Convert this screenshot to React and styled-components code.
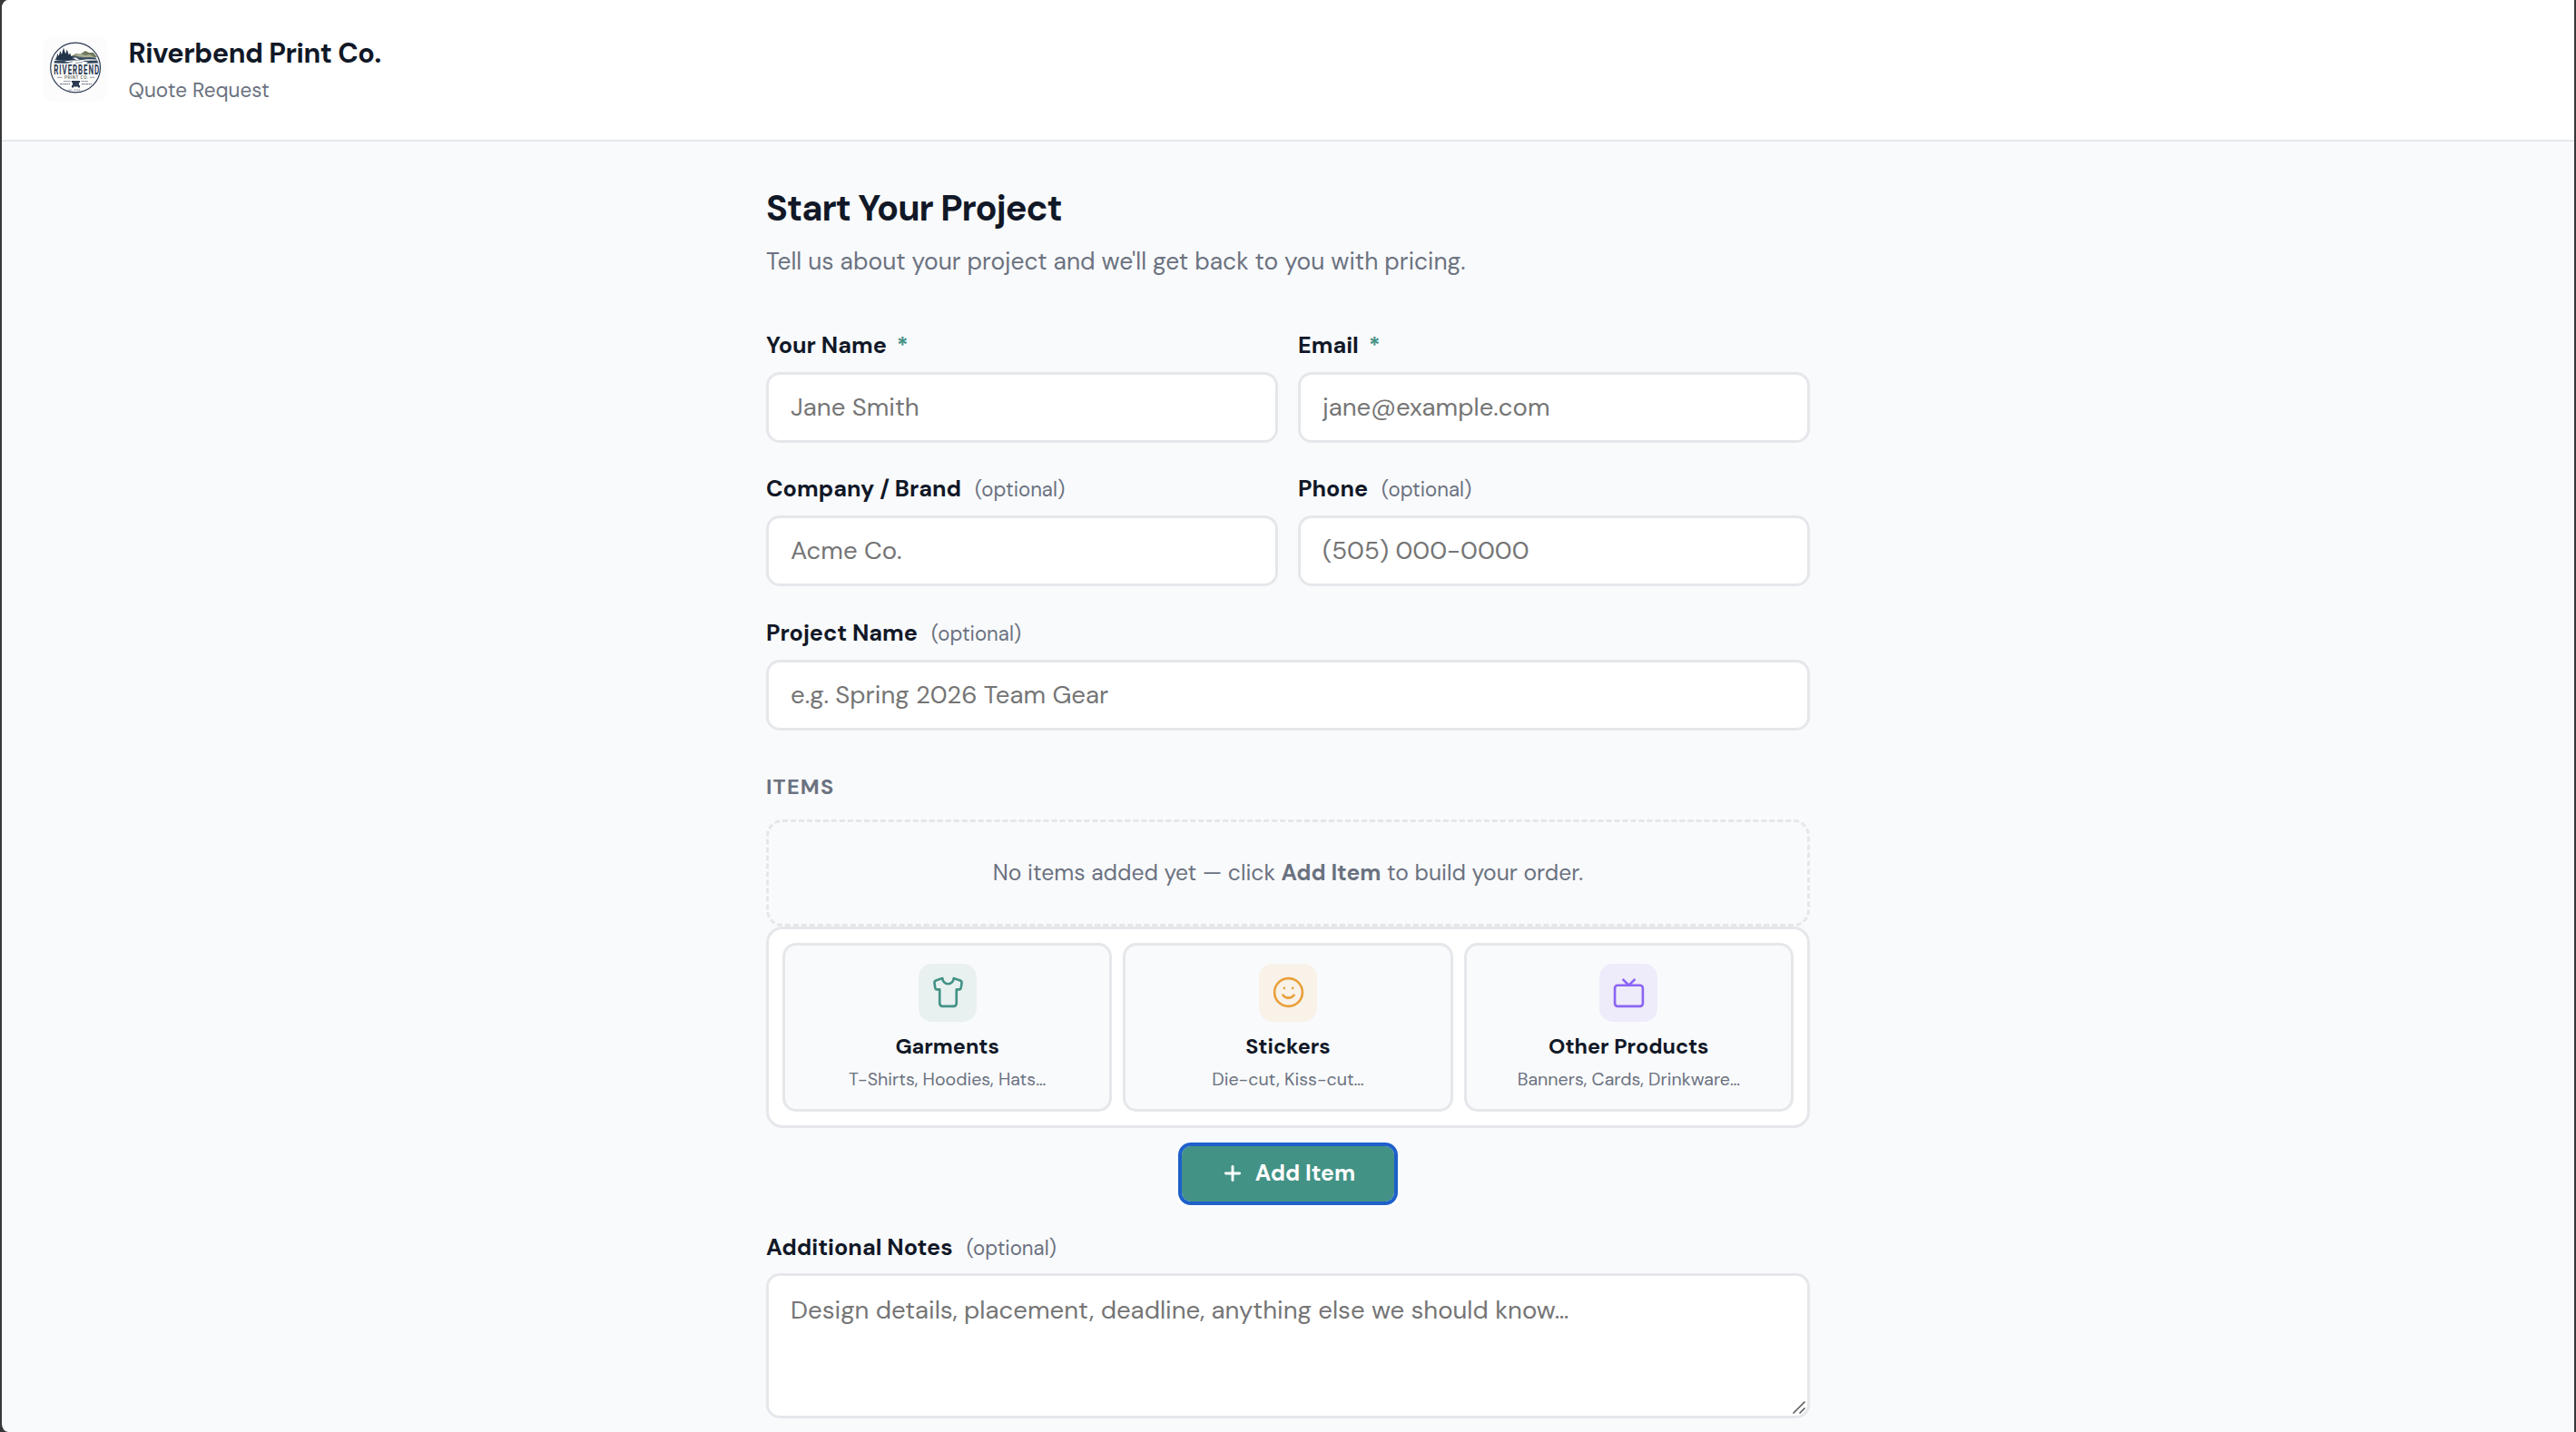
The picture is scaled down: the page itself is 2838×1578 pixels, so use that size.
import React from 'react';
import styled, { createGlobalStyle } from 'styled-components';
import { Plus, Shirt, Smile } from 'lucide-react';

const GlobalStyle = createGlobalStyle`
  * {
    box-sizing: border-box;
  }

  body {
    margin: 0;
    background: #38383a;
    font-family: 'DM Sans', Inter, sans-serif;
    color: #111827;
  }
`;

const Page = styled.div`
  height: 1578px;
  margin: 0 2px;
  overflow: hidden;
  background: #f9fafc;
  border-radius: 7px 0 0 7px / 9px 0 0 9px;
`;

const Header = styled.header`
  display: flex;
  align-items: flex-start;
  gap: 22.5px;
  height: 156px;
  padding: 40px 45px;
  background: #fff;
  border-bottom: 2px solid #e5e7eb;
`;

const LogoBox = styled.div`
  width: 72px;
  height: 72px;
  border-radius: 12px;
  background: #fcfcfc;

  svg {
    display: block;
    overflow: visible;
  }
`;

const ShopName = styled.div`
  margin: 0 0 7px;
  font-size: 30.5px;
  font-weight: 700;
  line-height: 37px;
  letter-spacing: -0.45px;
`;

const ShopTagline = styled.div`
  font-size: 22.5px;
  line-height: 32px;
  color: #6b7280;
`;

const Main = styled.main`
  width: 1150px;
  margin: 0 auto;
  padding-top: 51px;
`;

const Title = styled.h1`
  margin: 0 0 16px;
  font-size: 39.6px;
  font-weight: 700;
  line-height: 46px;
  letter-spacing: -0.93px;
`;

const Subtitle = styled.p`
  margin: 0 0 58px;
  font-size: 26.4px;
  line-height: 38px;
  color: #6b7280;
`;

const Fields = styled.div`
  display: grid;
  grid-template-columns: 1fr 1fr;
  gap: 35.4px 22px;
`;

const FieldBox = styled.div`
  grid-column: ${({ $wide }) => ($wide ? '1 / -1' : 'auto')};
`;

const Label = styled.label`
  display: flex;
  align-items: baseline;
  height: 32px;
  margin-bottom: 13px;
  font-size: 25.2px;
  font-weight: 700;
  line-height: 32.4px;
`;

const Required = styled.span`
  margin-left: 11px;
  color: #439286;
`;

const Optional = styled.span`
  margin-left: 15px;
  font-size: 22.2px;
  font-weight: 400;
  color: #6b7280;
`;

const Input = styled.input`
  display: block;
  width: 100%;
  height: 78px;
  padding: 0 24px;
  border: 3px solid #e5e7eb;
  border-radius: 15px;
  outline: none;
  background: #fff;
  font-family: inherit;
  font-size: 27.6px;

  &::placeholder {
    color: #757575;
  }
`;

const SectionTitle = styled.h2`
  margin: 47.7px 0 20.5px;
  font-size: 23.6px;
  font-weight: 700;
  line-height: 30px;
  letter-spacing: 1.2px;
  text-transform: uppercase;
  color: #6b7280;
`;

const EmptyState = styled.div`
  display: flex;
  align-items: center;
  justify-content: center;
  height: 118px;
  border: 3px dashed #e5e7eb;
  border-radius: 18px;
  font-size: 24.65px;
  line-height: 38px;
  white-space: pre;
  color: #6b7280;
`;

const Picker = styled.div`
  display: grid;
  grid-template-columns: repeat(3, 1fr);
  gap: 12px;
  height: 222px;
  padding: 15px;
  background: #fff;
  border: 3px solid #e5e7eb;
  border-radius: 18px;
`;

const Card = styled.button`
  display: flex;
  flex-direction: column;
  align-items: center;
  padding: 20px 0 0;
  background: #f9fafc;
  border: 3px solid #e5e7eb;
  border-radius: 15px;
  font-family: inherit;
  color: inherit;
`;

const IconBox = styled.div`
  display: grid;
  place-items: center;
  width: 64px;
  height: 64px;
  margin-bottom: 12px;
  padding: 0 0 1px 1px;
  border-radius: 15px;
  color: ${({ $color }) => $color};
  background: ${({ $tint }) => $tint};
`;

const CardName = styled.div`
  margin-bottom: 9px;
  font-size: 23.4px;
  font-weight: 700;
  line-height: 30px;
`;

const CardHint = styled.div`
  font-size: 19.6px;
  line-height: 26px;
  color: #6b7280;
`;

const AddButton = styled.button`
  display: flex;
  align-items: center;
  justify-content: center;
  gap: 12px;
  width: 234px;
  height: 61px;
  margin: 20px auto 35px;
  padding: 0 0 1px;
  border: 0;
  border-radius: 10px;
  outline: 4px solid #1f60cb;
  box-shadow: 0 0 0 6px #fff;
  background: #439286;
  font-family: inherit;
  font-size: 24.7px;
  font-weight: 700;
  color: #fff;
`;

const NotesWrap = styled.div`
  position: relative;
  margin-top: -1px;
`;

const Notes = styled.textarea`
  display: block;
  width: 100%;
  height: 160px;
  padding: 18px 24px;
  border: 3px solid #e5e7eb;
  border-radius: 15px;
  outline: none;
  resize: none;
  background: #fff;
  font-family: inherit;
  font-size: 27.6px;
  line-height: 40px;

  &::placeholder {
    color: #757575;
  }
`;

const Grip = styled.svg`
  position: absolute;
  right: 4px;
  bottom: 4px;
`;

const Logo = () => (
  <svg width="72" height="72" viewBox="0 0 72 72">
    <circle cx="36.1" cy="34.5" r="27.4" fill="#fdfdfc" stroke="#2c3a50" strokeWidth="1.2" />
    <path d="M31 22l6-3 4 1 6-4 4 2 5 0 4 5-8 1z" fill="#6f7a5c" />
    <path d="M34 21l7-2 6 2 5-1 5 3-12 0z" fill="#a9ae96" />
    <path
      d="M15 24l1.5-5 1.3 3 1.5-6 1.7 4 2-7.5 2.2 7 1.6-5 2 6 1.4-2 1.2 3.5 9 .5-8 1.5 5 1.5-9 1.5-12-.5-3-1z"
      fill="#22344a"
    />
    <path d="M13 27l16-1-5 2 8 .5-6 1.5-13.5-.5zM36 23l22 .5 2 2-11-.3-8 1zM43 27l17-.5 1.5 3-14 .5 3-1.2z" fill="#33475d" />
    <path d="M24 29.5l9-1.5M31 27l10-1M36 29.5l8-.8" stroke="#718091" strokeWidth=".8" />
    <text
      transform="translate(12.3 42.2) scale(.52 1)"
      fontFamily="Roboto, sans-serif"
      fontWeight="700"
      fontSize="15.4"
      textLength="96"
      fill="#2b3a52"
    >
      RIVERBEND
    </text>
    <text
      transform="translate(24 47.4) scale(.8 1)"
      fontFamily="Roboto, sans-serif"
      fontWeight="500"
      fontSize="6"
      textLength="32.5"
      fill="#6b6f60"
    >
      PRINT CO.
    </text>
    <path d="M16 45.3h5.5M52 45.3h5.5M23 49.6h8M42 49.6h8" stroke="#7b828c" strokeWidth=".8" />
    <path d="M19 52.7h11M43 52.7h11" stroke="#5f6b7c" strokeWidth="1" strokeDasharray="2 .5" />
    <path d="M32 49h9v2h-1v3h1v2.6h-2v-1h-5v1h-2V54h1v-3h-1z" fill="#2c3a50" />
    <path d="M28.5 59.2h4M34.5 59.2h6.5" stroke="#8d949e" strokeWidth="1.2" strokeDasharray="1.2 .6" />
  </svg>
);

const BoxIcon = () => (
  <svg
    width="37"
    height="37"
    viewBox="0 0 24 24"
    fill="none"
    stroke="currentColor"
    strokeWidth="1.7"
    strokeLinecap="round"
    strokeLinejoin="round"
  >
    <rect x="2" y="7" width="20" height="15" rx="2" />
    <path d="M16 3l-4 4-4-4" />
  </svg>
);

const Field = ({ label, required, placeholder, wide }) => (
  <FieldBox $wide={wide}>
    <Label>
      {label}
      {required ? <Required>*</Required> : <Optional>(optional)</Optional>}
    </Label>
    <Input placeholder={placeholder} />
  </FieldBox>
);

const categories = [
  {
    name: 'Garments',
    hint: 'T-Shirts, Hoodies, Hats…',
    color: '#439286',
    tint: '#e8f0f0',
    icon: <Shirt size={37} strokeWidth={1.7} />
  },
  {
    name: 'Stickers',
    hint: 'Die-cut, Kiss-cut…',
    color: '#e9a03b',
    tint: '#f9f2e9',
    icon: <Smile size={37} strokeWidth={1.7} />
  },
  {
    name: 'Other Products',
    hint: 'Banners, Cards, Drinkware…',
    color: '#8b64f4',
    tint: '#eeebfa',
    icon: <BoxIcon />
  }
];

export default function App() {
  return (
    <>
      <GlobalStyle />
      <Page>
        <Header>
          <LogoBox>
            <Logo />
          </LogoBox>
          <div>
            <ShopName>Riverbend Print Co.</ShopName>
            <ShopTagline>Quote Request</ShopTagline>
          </div>
        </Header>
        <Main>
          <Title>Start Your Project</Title>
          <Subtitle>Tell us about your project and we'll get back to you with pricing.</Subtitle>
          <Fields>
            <Field label="Your Name" required placeholder="Jane Smith" />
            <Field label="Email" required placeholder="jane@example.com" />
            <Field label="Company / Brand" placeholder="Acme Co." />
            <Field label="Phone" placeholder="(505) 000-0000" />
            <Field label="Project Name" placeholder="e.g. Spring 2026 Team Gear" wide />
          </Fields>

          <SectionTitle>Items</SectionTitle>
          <EmptyState>
            No items added yet — click <strong>Add Item</strong> to build your order.
          </EmptyState>
          <Picker>
            {categories.map(c => (
              <Card key={c.name}>
                <IconBox $color={c.color} $tint={c.tint}>
                  {c.icon}
                </IconBox>
                <CardName>{c.name}</CardName>
                <CardHint>{c.hint}</CardHint>
              </Card>
            ))}
          </Picker>
          <AddButton>
            <Plus size={26} strokeWidth={2.7} />
            Add Item
          </AddButton>

          <Label>
            Additional Notes
            <Optional>(optional)</Optional>
          </Label>
          <NotesWrap>
            <Notes placeholder="Design details, placement, deadline, anything else we should know…" />
            <Grip width="16" height="16" viewBox="0 0 16 16" stroke="#555" strokeWidth="1.5">
              <path d="M1.5 14.5l13-13M8.5 14.5l6-6" />
            </Grip>
          </NotesWrap>
        </Main>
      </Page>
    </>
  );
}
